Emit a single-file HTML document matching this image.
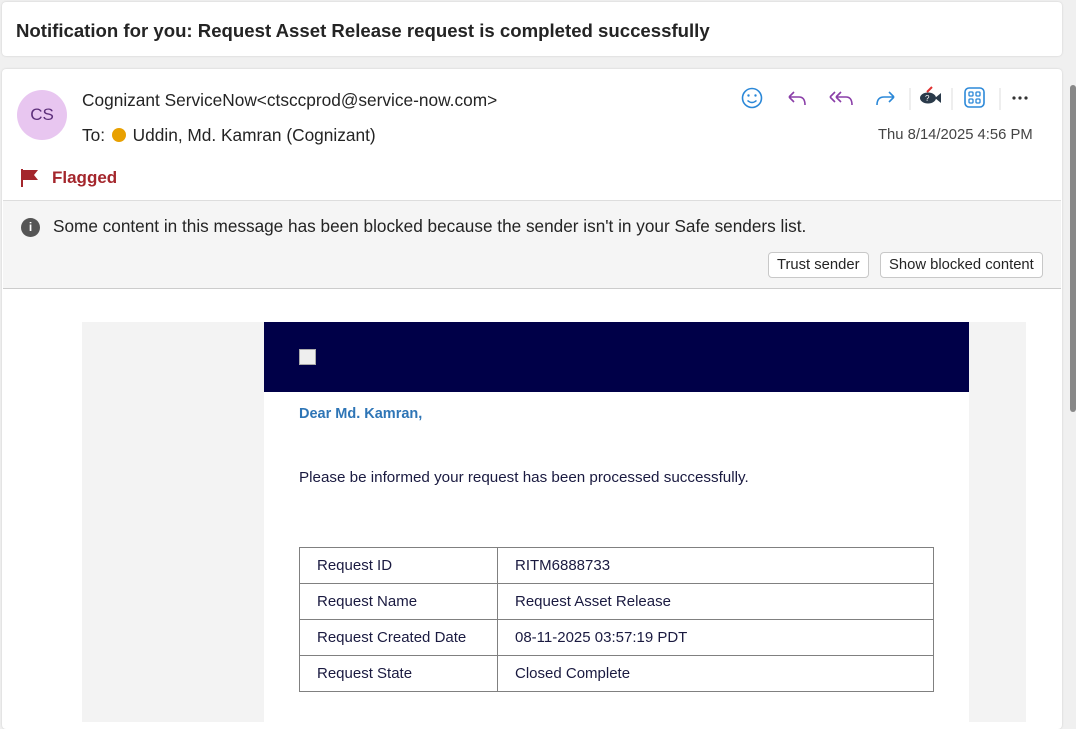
<!DOCTYPE html>
<html><head><style>
*{margin:0;padding:0;box-sizing:border-box}
body{width:1076px;height:721px;background:#f0f0f0;font-family:"Liberation Sans",sans-serif;position:relative;overflow:hidden;color:#242424}
.abs{position:absolute}
.card{background:#fff;border-radius:4px;box-shadow:0 0 2px rgba(0,0,0,.15)}
.btn{position:absolute;top:252px;height:26px;border:1px solid #c8c8c8;border-radius:4px;background:#fff;font-size:14.8px;line-height:24px;padding:0 8px;color:#242424;white-space:nowrap}
table{border-collapse:collapse;position:absolute;left:299px;top:547px;width:635px;font-size:15px;color:#1a1a40}
td{border:1px solid #808080;height:36px;padding-left:17px}
</style></head><body>
<div class="abs card" style="left:2px;top:2px;width:1060px;height:54px"></div>
<div class="abs" style="left:16px;top:20px;font-size:18.6px;font-weight:bold;color:#242424;white-space:nowrap">Notification for you: Request Asset Release request is completed successfully</div>

<div class="abs card" style="left:2px;top:69px;width:1060px;height:660px"></div>
<div class="abs" style="left:1068px;top:72px;width:8px;height:649px;background:#f0f0f0"></div>
<div class="abs" style="left:1070px;top:85px;width:6px;height:327px;background:#888;border-radius:3px"></div>

<div class="abs" style="left:17px;top:90px;width:50px;height:50px;border-radius:50%;background:#e8c6f0;color:#5c2e7a;font-size:17px;line-height:50px;text-align:center">CS</div>
<div class="abs" style="left:82px;top:90px;font-size:17.3px;white-space:nowrap">Cognizant ServiceNow&lt;ctsccprod@service-now.com&gt;</div>
<div class="abs" style="left:82px;top:125px;font-size:17.3px;white-space:nowrap">To: <span style="display:inline-block;width:14px;height:14px;border-radius:50%;background:#e8a000;vertical-align:-1px;margin:0 2px"></span> Uddin, Md. Kamran (Cognizant)</div>
<div class="abs" style="left:878px;top:127px;font-size:14.8px;color:#444;white-space:nowrap">Thu 8/14/2025 4:56 PM</div>

<svg class="abs" style="left:738px;top:84px" width="300" height="30">
<circle cx="14" cy="14" r="9.5" fill="none" stroke="#2b88d8" stroke-width="1.6"/><circle cx="10.5" cy="11.5" r="1.2" fill="#2b88d8"/><circle cx="17.5" cy="11.5" r="1.2" fill="#2b88d8"/><path d="M9.5 16.5q4.5 4 9 0" fill="none" stroke="#2b88d8" stroke-width="1.5"/>
<path d="M51 13h10q6 0 6 8M51 13l5-5M51 13l5 5" fill="none" stroke="#8a3ea8" stroke-width="1.6"/>
<path d="M98 13h10q6 0 6 8M98 13l5-5M98 13l5 5M92 13l5-5M92 13l5 5" fill="none" stroke="#8a3ea8" stroke-width="1.6"/>
<path d="M156 13h-10q-7 0-7 8M156 13l-5-5M156 13l-5 5" fill="none" stroke="#2b88d8" stroke-width="1.6"/>
<line x1="172" y1="4" x2="172" y2="26" stroke="#ddd"/>
<ellipse cx="190" cy="14" rx="8" ry="5.5" fill="#2a3a4a"/><path d="M197 14l6-5v10z" fill="#2a3a4a"/><path d="M189 8l5-5" stroke="#e03030" stroke-width="2"/><text x="187" y="17" font-size="8" fill="#fff" font-family="Liberation Sans">?</text>
<line x1="214" y1="4" x2="214" y2="26" stroke="#ddd"/>
<rect x="227" y="4" width="19" height="19" rx="4" fill="none" stroke="#2b88d8" stroke-width="1.6"/><rect x="231" y="8" width="4" height="4" rx="1" fill="none" stroke="#2b88d8" stroke-width="1.3"/><rect x="238" y="8" width="4" height="4" rx="1" fill="none" stroke="#2b88d8" stroke-width="1.3"/><rect x="231" y="15" width="4" height="4" rx="1" fill="none" stroke="#2b88d8" stroke-width="1.3"/><rect x="238" y="15" width="4" height="4" rx="1" fill="none" stroke="#2b88d8" stroke-width="1.3"/>
<line x1="262" y1="4" x2="262" y2="26" stroke="#ddd"/>
<circle cx="276" cy="14" r="1.6" fill="#333"/><circle cx="282" cy="14" r="1.6" fill="#333"/><circle cx="288" cy="14" r="1.6" fill="#333"/>
</svg>

<svg class="abs" style="left:20px;top:168px" width="20" height="20"><path d="M2 1v18" stroke="#a4262c" stroke-width="2"/><path d="M2 2h16l-4 5 4 5H2z" fill="#a4262c"/></svg>
<div class="abs" style="left:52px;top:168px;font-size:17px;font-weight:bold;color:#a4262c">Flagged</div>

<div class="abs" style="left:3px;top:200px;width:1058px;height:89px;background:#f5f5f5;border-top:1px solid #ddd;border-bottom:1px solid #ccc"></div>
<div class="abs" style="left:21px;top:218px;width:19px;height:19px;border-radius:50%;background:#555;color:#fff;font-size:12px;font-weight:bold;text-align:center;line-height:19px">i</div>
<div class="abs" style="left:53px;top:216px;font-size:17.2px;white-space:nowrap">Some content in this message has been blocked because the sender isn't in your Safe senders list.</div>
<div class="btn" style="left:768px">Trust sender</div>
<div class="btn" style="left:880px">Show blocked content</div>

<div class="abs" style="left:82px;top:322px;width:944px;height:400px;background:#f3f3f3"></div>
<div class="abs" style="left:264px;top:322px;width:705px;height:400px;background:#fff"></div>
<div class="abs" style="left:264px;top:322px;width:705px;height:70px;background:#000048"></div>
<div class="abs" style="left:299px;top:349px;width:17px;height:16px;border:1px solid #aaa;background:#eee"></div>
<div class="abs" style="left:299px;top:406px;font-size:14.5px;font-weight:bold;color:#2e75b6">Dear Md. Kamran,</div>
<div class="abs" style="left:299px;top:469px;font-size:15.2px;color:#1a1a40;white-space:nowrap">Please be informed your request has been processed successfully.</div>
<table>
<tr><td style="width:198px">Request ID</td><td>RITM6888733</td></tr>
<tr><td>Request Name</td><td>Request Asset Release</td></tr>
<tr><td>Request Created Date</td><td>08-11-2025 03:57:19 PDT</td></tr>
<tr><td>Request State</td><td>Closed Complete</td></tr>
</table>
</body></html>
